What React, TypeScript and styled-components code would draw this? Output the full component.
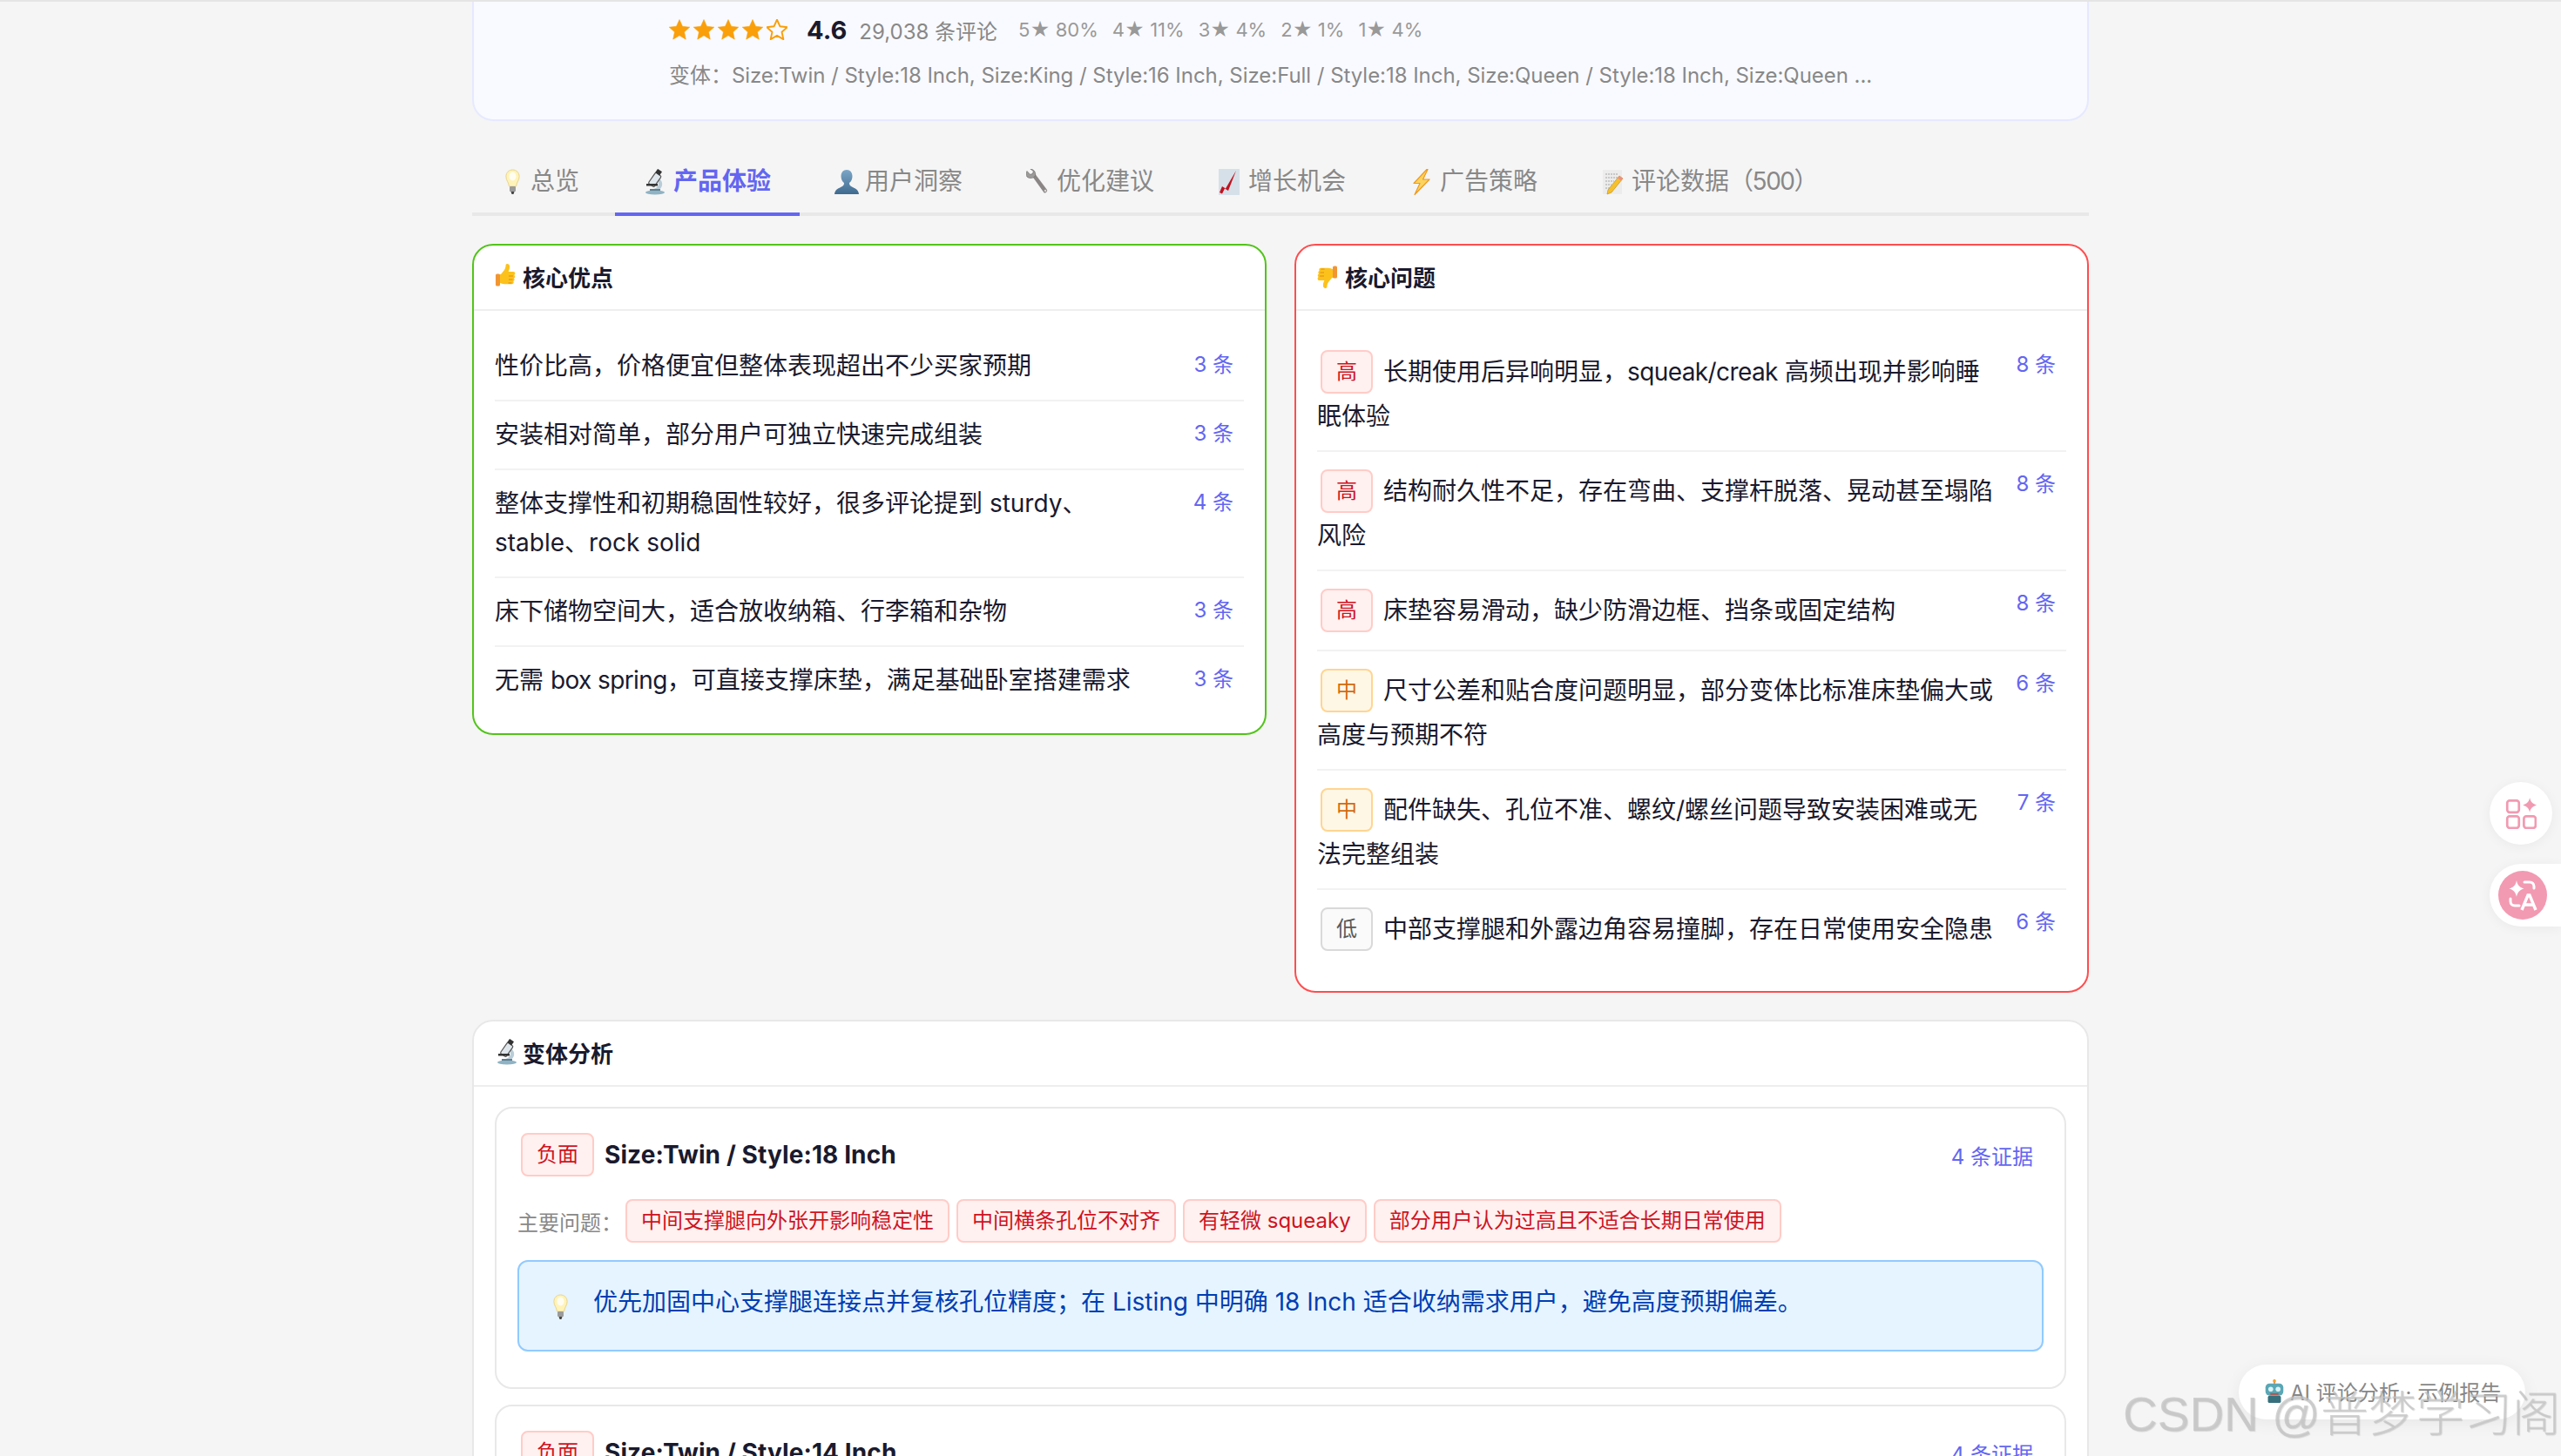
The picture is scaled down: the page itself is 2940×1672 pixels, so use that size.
import React from "react";
import styled, { createGlobalStyle } from "styled-components";

const GlobalStyle = createGlobalStyle`
  html, body {
    margin: 0;
    height: 100%;
    overflow: hidden;
    background: #f5f5f5;
    font-family: Inter, "Noto Sans CJK SC", "Noto Sans", sans-serif;
    color: #1a1a2e;
  }
`;

const Page = styled.div`
  position: relative;
  width: 2940px;
  height: 1672px;
  box-sizing: border-box;
  overflow: hidden;
  border-top: 2px solid #e5e5e5;
`;

const Container = styled.div`
  width: 1856px;
  margin: 0 auto;
`;

const ProductCard = styled.section`
  box-sizing: border-box;
  height: 137px;
  padding: 10px 0 0 224px;
  background: #f9faff;
  border: 2px solid #e6e9ff;
  border-top: 0;
  border-radius: 0 0 24px 24px;
`;

const RatingRow = styled.div`
  display: flex;
  align-items: center;
  height: 44px;
  margin-bottom: 12px;
`;

const Stars = styled.div`
  display: flex;
  gap: 4px;
  width: 137px;
  margin-right: 21px;
`;

const Score = styled.span`
  font-size: 29px;
  font-weight: 700;
  margin-right: 14px;
`;

const ReviewCount = styled.span`
  font-size: 24px;
  color: #888;
  margin-right: 24px;
`;

const Distribution = styled.div`
  display: flex;
  gap: 16px;
  font-size: 22px;
  color: #999;
`;

const VariantLine = styled.div`
  font-size: 24px;
  line-height: 38px;
  letter-spacing: -0.04px;
  color: #888;
  white-space: nowrap;
`;

const TabBar = styled.nav`
  display: flex;
  gap: 8px;
  margin-top: 32px;
  border-bottom: 4px solid #e8e8e8;
`;

const Tab = styled.div<{ $active?: boolean }>`
  display: flex;
  align-items: center;
  gap: 5px;
  padding: 15px 33px 13px 32px;
  margin-bottom: -4px;
  font-size: 28px;
  line-height: 45px;
  font-weight: ${({ $active }) => ($active ? 600 : 400)};
  color: ${({ $active }) => ($active ? "#6366f1" : "#888")};
  border-bottom: 4px solid ${({ $active }) => ($active ? "#6366f1" : "transparent")};
`;

const TabCount = styled.span`
  letter-spacing: -1.5px;
`;

const Panels = styled.div`
  display: grid;
  grid-template-columns: 1fr 1fr;
  gap: 32px;
  align-items: start;
  margin-top: 32px;
`;

const Card = styled.section<{ $border: string }>`
  background: #fff;
  border: 2px solid ${({ $border }) => $border};
  border-radius: 24px;
`;

const CardHeader = styled.header`
  box-sizing: border-box;
  display: flex;
  align-items: center;
  gap: 2px;
  height: 75px;
  padding: 0 24px 3px;
  font-size: 26px;
  font-weight: 600;
  border-bottom: 2px solid #eeeeee;
`;

const CardBody = styled.div<{ $top: number; $bottom: number }>`
  padding: ${({ $top }) => $top}px 24px ${({ $bottom }) => $bottom}px;
`;

const Row = styled.div`
  display: flex;
  padding: 16px 0;
  border-bottom: 2px solid #f2f2f2;

  &:last-child {
    border-bottom: 0;
  }
`;

const RowText = styled.div`
  flex: 1;
  min-width: 0;
  font-size: 28px;
  line-height: 45px;
  white-space: pre-line;
`;

const Latin = styled.span`
  letter-spacing: -0.6px;
`;

const RowCount = styled.div`
  flex: none;
  box-sizing: border-box;
  width: 82px;
  margin-top: 2px;
  padding-right: 12px;
  text-align: right;
  font-size: 24px;
  line-height: 38px;
  color: #6366f1;
`;

const tones = {
  red: { bg: "#fff1f0", border: "#ffccc7", text: "#cf1322" },
  orange: { bg: "#fff7e6", border: "#ffd591", text: "#d46b08" },
  gray: { bg: "#fafafa", border: "#d9d9d9", text: "#595959" },
};

type Tone = keyof typeof tones;

const Tag = styled.span<{ $tone: Tone }>`
  display: inline-block;
  padding: 4px 16px;
  margin: 4px 12px 4px 4px;
  vertical-align: 2px;
  font-size: 24px;
  line-height: 38px;
  white-space: nowrap;
  border-radius: 8px;
  background: ${({ $tone }) => tones[$tone].bg};
  border: 2px solid ${({ $tone }) => tones[$tone].border};
  color: ${({ $tone }) => tones[$tone].text};
`;

const VariantSection = styled(Card)`
  margin-top: 31px;
`;

const VariantCard = styled.article`
  padding: 24px 24px 41px;
  margin-bottom: 18px;
  border: 2px solid #e8e8e8;
  border-radius: 20px;
`;

const VariantHead = styled.div`
  display: flex;
  align-items: center;
`;

const VariantName = styled.h3`
  flex: 1;
  margin: 0;
  font-size: 28px;
  font-weight: 700;
  letter-spacing: 0.1px;
`;

const Evidence = styled.span`
  padding-right: 12px;
  font-size: 24px;
  color: #6366f1;
`;

const IssueRow = styled.div`
  display: flex;
  align-items: center;
  gap: 8px;
  margin-top: 22px;

  ${Tag} {
    margin: 0;
  }
`;

const IssueLabel = styled.span`
  flex: none;
  width: 116px;
  font-size: 24px;
  color: #888;
  white-space: nowrap;
`;

const Advice = styled.div`
  display: flex;
  gap: 22px;
  margin-top: 20px;
  padding: 24px 24px 32px 33px;
  font-size: 28px;
  line-height: 45px;
  color: #003eb3;
  background: #e6f4ff;
  border: 2px solid #91caff;
  border-radius: 12px;
`;

const AdviceIcon = styled.span`
  display: flex;
  align-items: center;
  padding-top: 10px;
`;

const FloatButton = styled.div`
  position: absolute;
  right: 10px;
  top: 896px;
  display: flex;
  align-items: center;
  justify-content: center;
  width: 72px;
  height: 72px;
  border-radius: 50%;
  background: #fff;
  box-shadow: 0 2px 14px rgba(0, 0, 0, 0.05);
`;

const TranslateTab = styled.div`
  position: absolute;
  right: 0;
  top: 990px;
  box-sizing: border-box;
  display: flex;
  align-items: center;
  width: 82px;
  height: 72px;
  padding-left: 10px;
  border-radius: 36px 0 0 36px;
  background: #fff;
  box-shadow: 0 2px 14px rgba(0, 0, 0, 0.05);
`;

const TranslateDisc = styled.div`
  display: flex;
  align-items: center;
  justify-content: center;
  width: 56px;
  height: 56px;
  border-radius: 50%;
  background: #f29ab2;
`;

const ReportPill = styled.div`
  position: absolute;
  left: 2570px;
  top: 1565px;
  box-sizing: border-box;
  display: flex;
  align-items: center;
  gap: 4px;
  width: 329px;
  height: 63px;
  padding: 0 0 2px 27px;
  border-radius: 32px;
  background: #fff;
  box-shadow: 0 4px 20px rgba(0, 0, 0, 0.06);
  font-size: 24px;
  color: #888;
  white-space: nowrap;
`;

const Watermark = styled.div`
  position: absolute;
  left: 2437px;
  top: 1590px;
  font-family: "Liberation Sans", "Noto Sans CJK SC", sans-serif;
  font-size: 55px;
  line-height: 64px;
  font-weight: 300;
  white-space: nowrap;
  color: rgba(196, 196, 196, 0.72);
  text-shadow: 1px 1px 1px rgba(120, 120, 120, 0.25);
`;

const EmojiSvg = styled.svg<{ $size: number }>`
  flex: none;
  display: block;
  width: ${({ $size }) => $size}px;
  height: ${({ $size }) => $size}px;
`;

type EmojiName =
  | "bulb"
  | "scope"
  | "user"
  | "wrench"
  | "chart"
  | "zap"
  | "memo"
  | "up"
  | "down"
  | "robot";

const thumb = (
  <>
    <path
      d="M5 13h5l4-5c1-1.6 1.6-3.6 1.6-5.4 0-2 3.8-2.2 4.4.7.4 2-.3 4.7-1.4 6.7h5.6c2.6 0 2.8 3.3.9 3.9 1.7.7 1.5 3.3-.3 3.7 1.3.9 1 3.1-.6 3.4 1 1 .5 3.2-1.5 3.2h-8.5c-2.6 0-3.5-1-5.5-1.2H5z"
      fill="#fcc21b"
    />
    <rect x="4" y="12.5" width="5" height="14" rx="1.5" fill="#f19534" />
    <path d="M19 15h5M19 19h4.5M18.5 23h4" stroke="#e48c15" strokeWidth="1" fill="none" />
  </>
);

const glyphs: Record<EmojiName, React.ReactNode> = {
  bulb: (
    <>
      <path
        d="M14.500 1c-4.400 0-7.600 3.300-7.600 7.800 0 4.200 3 6.400 3.600 11.200h8c.6-4.800 3.600-7 3.600-11.200C22.100 4.300 18.900 1 14.500 1z"
        fill="#fff3b8"
        stroke="#e9d48c"
        strokeWidth="1"
      />
      <ellipse cx="14.500" cy="8.500" rx="4" ry="5" fill="#fffdf0" />
      <rect x="11" y="20" width="7" height="6" rx="1" fill="#9b9b9b" />
      <path d="M12.500 26h4l-1 3h-2z" fill="#444" />
    </>
  ),
  scope: (
    <>
      <ellipse cx="14" cy="27" rx="11" ry="2.500" fill="#8fb3c4" />
      <path d="M18.500 11c5 3 5.200 10.500-1 13.500H12l0-1.500c4.800-.5 8-6 4.500-10.500z" fill="#b9cdd8" />
      <rect x="10" y="5" width="8" height="15" rx="1.500" transform="rotate(35 14 12)" fill="#dfe7ec" stroke="#555" strokeWidth="1.200" />
      <rect x="15.500" y="1" width="6" height="5" transform="rotate(35 18 3)" fill="#333" />
      <rect x="4" y="17" width="13" height="2.500" fill="#333" />
      <rect x="8" y="23" width="12" height="2" fill="#5f7f90" />
    </>
  ),
  user: (
    <>
      <defs>
        <linearGradient id="userFill" x1="0" y1="0" x2="0" y2="1">
          <stop offset="0" stopColor="#7ca6c6" />
          <stop offset="1" stopColor="#3f6a8f" />
        </linearGradient>
      </defs>
      <path
        d="M14 1c-4 0-6.500 3-6.500 7.500 0 3.300 1.500 6 3.500 7.500 0 2.500-1 3.500-4 5-3.500 1.700-6.500 3-7 8h28c-.5-5-3.500-6.300-7-8-3-1.500-4-2.500-4-5 2-1.500 3.500-4.200 3.500-7.500C20.500 4 18 1 14 1z"
        fill="url(#userFill)"
      />
    </>
  ),
  wrench: (
    <>
      <path d="M6 7l3-3 15 20c1 1.500-2 4.500-3.500 3.300z" fill="#8b8686" />
      <path d="M1 2.500l3.500 3.800 3-.8.800-3L4.800 0C8 .2 11.500 3 10.500 7.500 9 11 4 11.500 1 9-.5 7-.2 4.500 1 2.500z" fill="#9d9a9a" stroke="#6c6868" strokeWidth=".6" />
      <circle cx="22" cy="25" r="1.300" fill="#d8d4d4" />
    </>
  ),
  chart: (
    <>
      <rect x="1" y="0" width="24" height="30" fill="#d6e0e8" />
      <path d="M2 27l3-7 4 2.500L21 2l-9 23-4-2.500-3 6z" fill="#c1121f" />
    </>
  ),
  zap: (
    <path
      d="M20 0.500L5 16.500h7L6 29.500 23 12h-7.500L21 .5z"
      fill="#fcd35f"
      stroke="#ee9a1f"
      strokeWidth="1.200"
      strokeLinejoin="round"
    />
  ),
  memo: (
    <>
      <rect x="2" y="1" width="22" height="28" fill="#ececec" />
      <path d="M5 6h15M5 10h15M5 14h10M5 18h7M5 22h5" stroke="#a5a5a5" strokeWidth="1" strokeDasharray="2 1" />
      <path d="M21 8l4 3-13 16-5 2 1-5z" fill="#f6c02c" stroke="#b88a15" strokeWidth=".6" />
      <path d="M21 8l4 3-2 2.500-4-3z" fill="#ef8d8d" />
    </>
  ),
  up: <g transform="translate(-3 0)">{thumb}</g>,
  down: <g transform="matrix(-1 0 0 -1 27 30)">{thumb}</g>,
  robot: (
    <>
      <path d="M15 0v5" stroke="#c77" strokeWidth="2" />
      <circle cx="15" cy="2" r="2" fill="#f5a623" />
      <rect x="4" y="5" width="22" height="15" rx="5" fill="#5aa7b5" />
      <circle cx="10.500" cy="12" r="3" fill="#d9f4f7" />
      <circle cx="19.500" cy="12" r="3" fill="#d9f4f7" />
      <rect x="10" y="17" width="10" height="2" fill="#c44b3f" />
      <rect x="7" y="20" width="16" height="9" rx="2" fill="#37707c" />
    </>
  ),
};

const Emoji = ({ name, size = 30 }: { name: EmojiName; size?: number }) => (
  <EmojiSvg $size={size} viewBox="0 0 30 30" aria-hidden>
    {glyphs[name]}
  </EmojiSvg>
);

const StarIcon = ({ hollow }: { hollow?: boolean }) => (
  <svg width="24" height="24" viewBox="1 1 22 22" aria-hidden>
    <path
      d="M12 1.500l3.200 7.100 7.600.8-5.700 5.200 1.600 7.600L12 18.300l-6.700 3.900 1.600-7.600L1.200 9.400l7.600-.8z"
      fill={hollow ? "none" : "#fa9f0a"}
      stroke="#fa9f0a"
      strokeWidth={hollow ? 1.800 : 0.5}
      strokeLinejoin="round"
    />
  </svg>
);

const tabs: { icon: EmojiName; label: React.ReactNode; active?: boolean }[] = [
  { icon: "bulb", label: "总览" },
  { icon: "scope", label: "产品体验", active: true },
  { icon: "user", label: "用户洞察" },
  { icon: "wrench", label: "优化建议" },
  { icon: "chart", label: "增长机会" },
  { icon: "zap", label: "广告策略" },
  { icon: "memo", label: <span>评论数据<TabCount>（500）</TabCount></span> },
];

const pros: { text: React.ReactNode; count: number }[] = [
  { text: "性价比高，价格便宜但整体表现超出不少买家预期", count: 3 },
  { text: "安装相对简单，部分用户可独立快速完成组装", count: 3 },
  { text: "整体支撑性和初期稳固性较好，很多评论提到 sturdy、\nstable、rock solid", count: 4 },
  { text: "床下储物空间大，适合放收纳箱、行李箱和杂物", count: 3 },
  { text: <>无需 <Latin>box spring</Latin>，可直接支撑床垫，满足基础卧室搭建需求</>, count: 3 },
];

const cons: { level: string; tone: Tone; text: React.ReactNode; count: number }[] = [
  { level: "高", tone: "red", text: <>长期使用后异响明显，<Latin>squeak/creak</Latin> 高频出现并影响睡眠体验</>, count: 8 },
  { level: "高", tone: "red", text: "结构耐久性不足，存在弯曲、支撑杆脱落、晃动甚至塌陷风险", count: 8 },
  { level: "高", tone: "red", text: "床垫容易滑动，缺少防滑边框、挡条或固定结构", count: 8 },
  { level: "中", tone: "orange", text: "尺寸公差和贴合度问题明显，部分变体比标准床垫偏大或高度与预期不符", count: 6 },
  { level: "中", tone: "orange", text: "配件缺失、孔位不准、螺纹/螺丝问题导致安装困难或无法完整组装", count: 7 },
  { level: "低", tone: "gray", text: "中部支撑腿和外露边角容易撞脚，存在日常使用安全隐患", count: 6 },
];

const issues = ["中间支撑腿向外张开影响稳定性", "中间横条孔位不对齐", "有轻微 squeaky", "部分用户认为过高且不适合长期日常使用"];

const ratings = ["5★ 80%", "4★ 11%", "3★ 4%", "2★ 1%", "1★ 4%"];

export default function App() {
  return (
    <Page>
      <GlobalStyle />
      <Container>
        <ProductCard>
          <RatingRow>
            <Stars>
              <StarIcon />
              <StarIcon />
              <StarIcon />
              <StarIcon />
              <StarIcon hollow />
            </Stars>
            <Score>4.6</Score>
            <ReviewCount>29,038 条评论</ReviewCount>
            <Distribution>
              {ratings.map((r) => (
                <span key={r}>{r}</span>
              ))}
            </Distribution>
          </RatingRow>
          <VariantLine>
            变体：Size:Twin / Style:18 Inch, Size:King / Style:16 Inch, Size:Full / Style:18 Inch, Size:Queen / Style:18
            Inch, Size:Queen ...
          </VariantLine>
        </ProductCard>

        <TabBar>
          {tabs.map((t) => (
            <Tab key={t.icon} $active={t.active}>
              <Emoji name={t.icon} />
              {t.label}
            </Tab>
          ))}
        </TabBar>

        <Panels>
          <Card $border="#52c41a">
            <CardHeader>
              <Emoji name="up" />
              核心优点
            </CardHeader>
            <CardBody $top={25} $bottom={22}>
              {pros.map((p, i) => (
                <Row key={i}>
                  <RowText>{p.text}</RowText>
                  <RowCount>{p.count} 条</RowCount>
                </Row>
              ))}
            </CardBody>
          </Card>
          <Card $border="#ff4d4f">
            <CardHeader>
              <Emoji name="down" />
              核心问题
            </CardHeader>
            <CardBody $top={25} $bottom={26}>
              {cons.map((c, i) => (
                <Row key={i}>
                  <RowText>
                    <Tag $tone={c.tone}>{c.level}</Tag>
                    {c.text}
                  </RowText>
                  <RowCount>{c.count} 条</RowCount>
                </Row>
              ))}
            </CardBody>
          </Card>
        </Panels>

        <VariantSection $border="#e8e8e8">
          <CardHeader>
            <Emoji name="scope" />
            变体分析
          </CardHeader>
          <CardBody $top={23} $bottom={24}>
            <VariantCard>
              <VariantHead>
                <Tag $tone="red">负面</Tag>
                <VariantName>Size:Twin / Style:18 Inch</VariantName>
                <Evidence>4 条证据</Evidence>
              </VariantHead>
              <IssueRow>
                <IssueLabel>主要问题：</IssueLabel>
                {issues.map((i) => (
                  <Tag key={i} $tone="red">
                    {i}
                  </Tag>
                ))}
              </IssueRow>
              <Advice>
                <AdviceIcon>
                  <Emoji name="bulb" />
                </AdviceIcon>
                优先加固中心支撑腿连接点并复核孔位精度；在 Listing 中明确 18 Inch 适合收纳需求用户，避免高度预期偏差。
              </Advice>
            </VariantCard>
            <VariantCard>
              <VariantHead>
                <Tag $tone="red">负面</Tag>
                <VariantName>Size:Twin / Style:14 Inch</VariantName>
                <Evidence>4 条证据</Evidence>
              </VariantHead>
            </VariantCard>
          </CardBody>
        </VariantSection>
      </Container>

      <FloatButton>
        <svg width="36" height="36" viewBox="0 0 32 32" fill="none" stroke="#f29ab2" strokeWidth="2.400" aria-hidden>
          <rect x="2" y="3" width="12" height="12" rx="2.500" />
          <rect x="2" y="19" width="12" height="12" rx="2.500" />
          <rect x="19" y="19" width="12" height="12" rx="2.500" />
          <path d="M25 0c.8 4 2.500 6 7 7.500-4.500 1.500-6.200 3.500-7 7.500-.8-4-2.500-6-7-7.500 4.500-1.500 6.200-3.500 7-7.500z" fill="#f29ab2" stroke="none" />
        </svg>
      </FloatButton>
      <TranslateTab>
        <TranslateDisc>
          <svg width="40" height="40" viewBox="0 0 40 40" fill="none" stroke="#fff" strokeWidth="3" aria-hidden>
            <path d="M13 3c1 5.500 3.500 8 8.500 9.500-5 1.500-7.500 4-8.500 9.500-1-5.500-3.500-8-8.500-9.500C9.500 11 12 8.500 13 3z" fill="#fff" stroke="none" />
            <path d="M22 5h6c3 0 5 2 5 5v2M6 24v3c0 3 2 5 5 5h5" strokeLinecap="round" />
            <path d="M19 37l7-17h2l7 17M22 31h10" strokeWidth="3.400" />
          </svg>
        </TranslateDisc>
      </TranslateTab>
      <ReportPill>
        <Emoji name="robot" size={28} />
        AI 评论分析 · 示例报告
      </ReportPill>
      <Watermark>CSDN @普梦学习阁</Watermark>
    </Page>
  );
}
